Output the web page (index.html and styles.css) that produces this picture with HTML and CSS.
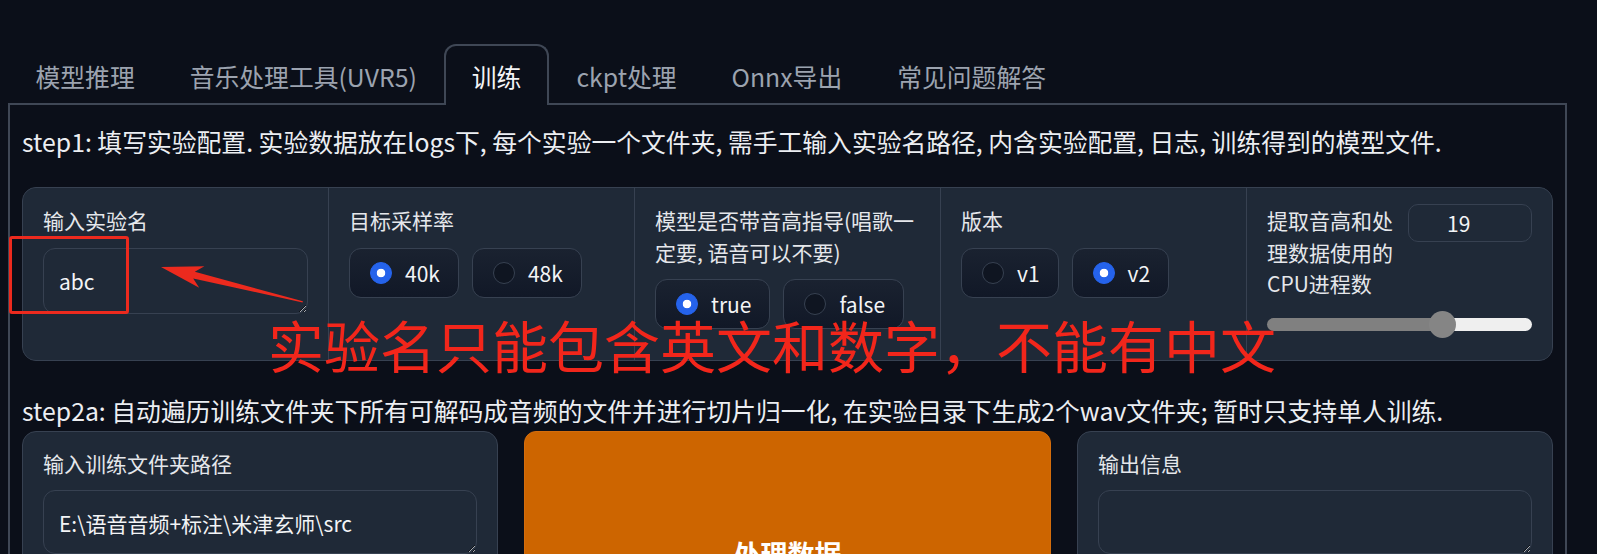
FILE: index.html
```html
<!DOCTYPE html>
<html lang="zh-CN">
<head>
    <meta charset="UTF-8">
    <meta name="viewport" content="width=device-width, initial-scale=1.0">
    <title>RVC WebUI</title>
    <link rel="stylesheet" href="styles.css">
</head>
<body>
<div class="app">
    <div class="tabs">
        <button class="tab">模型推理</button>
        <button class="tab">音乐处理工具(UVR5)</button>
        <button class="tab active">训练</button>
        <button class="tab">ckpt处理</button>
        <button class="tab">Onnx导出</button>
        <button class="tab">常见问题解答</button>
    </div>

    <div class="panel">
        <p class="step">step1: 填写实验配置. 实验数据放在logs下, 每个实验一个文件夹, 需手工输入实验名路径, 内含实验配置, 日志, 训练得到的模型文件.</p>

        <div class="form-row">
            <div class="field">
                <label class="label" for="expName">输入实验名</label>
                <textarea class="text-input" id="expName" rows="1">abc</textarea>
            </div>
            <div class="field">
                <span class="label">目标采样率</span>
                <div class="radios">
                    <label class="radio"><input type="radio" name="sr" checked><span>40k</span></label>
                    <label class="radio"><input type="radio" name="sr"><span>48k</span></label>
                </div>
            </div>
            <div class="field">
                <span class="label">模型是否带音高指导(唱歌一定要, 语音可以不要)</span>
                <div class="radios">
                    <label class="radio"><input type="radio" name="f0" checked><span>true</span></label>
                    <label class="radio"><input type="radio" name="f0"><span>false</span></label>
                </div>
            </div>
            <div class="field">
                <span class="label">版本</span>
                <div class="radios">
                    <label class="radio"><input type="radio" name="ver"><span>v1</span></label>
                    <label class="radio"><input type="radio" name="ver" checked><span>v2</span></label>
                </div>
            </div>
            <div class="field">
                <div class="slider-head">
                    <label class="label" for="cpuNum">提取音高和处理数据使用的CPU进程数</label>
                    <input class="number" type="number" id="cpuNum" value="19">
                </div>
                <input class="range" type="range" min="0" max="28" value="19" style="--fill: 66%">
            </div>
        </div>

        <p class="step step2">step2a: 自动遍历训练文件夹下所有可解码成音频的文件并进行切片归一化, 在实验目录下生成2个wav文件夹; 暂时只支持单人训练.</p>

        <div class="row">
            <div class="block">
                <label class="label" for="trainDir">输入训练文件夹路径</label>
                <textarea class="text-input short" id="trainDir" rows="1">E:\语音音频+标注\米津玄师\src</textarea>
            </div>
            <button class="primary">处理数据</button>
            <div class="block">
                <label class="label" for="info1">输出信息</label>
                <textarea class="text-input short" id="info1" rows="1"></textarea>
            </div>
        </div>
    </div>

    <!-- red markup drawn on top -->
    <div class="note-box"></div>
    <svg class="note-arrow" width="320" height="320" viewBox="0 0 320 320">
        <polygon fill="#ec2a1e" points="161,267 204.4,266.3 194.8,271.7 302.9,301.3 302.6,302.5 193.2,278.5 199.2,287.7"/>
    </svg>
    <div class="note-text">实验名只能包含英文和数字，不能有中文</div>
</div>
</body>
</html>
```

FILE: styles.css
```css
html, body {
    margin: 0;
    height: 100%;
    overflow: hidden;
}
body {
    background: #0b0f19;
    color: #e5e7eb;
    font-family: "Noto Sans CJK SC", "Noto Sans", sans-serif;
    font-size: 24.8px;
}
.app {
    position: relative;
    width: 1559px;
    padding: 44px 0 0 8px;
}

/* tab strip */
.tabs {
    display: flex;
    position: relative;
    z-index: 1;
}
.tab {
    height: 61px;
    margin-bottom: -2px;
    padding: 0 25.5px;
    border: 2px solid transparent;
    border-bottom: 0;
    border-radius: 12px 12px 0 0;
    background: none;
    color: #9ca3af;
    font: inherit;
    cursor: pointer;
}
.tab.active {
    border-color: #3f4755;
    background: #0b0f19;
    color: #f3f4f6;
}

.panel {
    height: 600px;
    padding: 18px 12px 0;
    border: 2px solid #3f4755;
}
.step {
    margin: 0;
    line-height: 37px;
    color: #eceef2;
}
.step2 {
    margin: 31px 0 2px;
}

/* first row: one box split in five */
.form-row {
    display: grid;
    grid-template-columns: repeat(5, 1fr);
    gap: 1px;
    margin-top: 27px;
    background: #374151;
    border: 1px solid #374151;
    border-radius: 14px;
    overflow: hidden;
}
.field {
    background: #1f2937;
    padding: 17px 20px;
    min-width: 0;
}
.label {
    display: block;
    margin-bottom: 11px;
    font-size: 21px;
    line-height: 31.5px;
    color: #e5e7eb;
}
.text-input {
    display: block;
    width: 100%;
    height: 66px;
    box-sizing: border-box;
    padding: 14px 15px;
    background: #1f2937;
    border: 1px solid #374151;
    border-radius: 12px;
    color: #f3f4f6;
    font: inherit;
    font-size: 21px;
    line-height: 36px;
    resize: vertical;
    outline: none;
    color-scheme: dark;
}
.text-input.short {
    height: 64px;
    padding-bottom: 12px;
}

.radios {
    display: flex;
    flex-wrap: wrap;
    gap: 13px;
}
.radio {
    display: flex;
    align-items: center;
    gap: 13px;
    height: 50px;
    box-sizing: border-box;
    padding: 0 18px 0 20px;
    border: 1px solid #374151;
    border-radius: 12px;
    background: linear-gradient(to top, #111827, #1a2230);
    color: #f3f4f6;
    font-size: 21px;
}
.radio input {
    appearance: none;
    -webkit-appearance: none;
    margin: 0;
    width: 22px;
    height: 22px;
    border-radius: 50%;
    border: 1px solid #374151;
    background: #0f1521;
}
.radio input:checked {
    border-color: #2563eb;
    background: #2563eb radial-gradient(circle, #fff 0 4px, transparent 4.6px);
}

/* cpu slider */
.slider-head {
    display: flex;
    align-items: flex-start;
    gap: 12px;
}
.slider-head .label {
    flex: 1;
    margin: 0;
}
.number {
    width: 124px;
    height: 38px;
    box-sizing: border-box;
    margin-top: -1px;
    padding: 0 0 0 38px;
    background: #1f2937;
    border: 1px solid #374151;
    border-radius: 10px;
    color: #f3f4f6;
    font: inherit;
    font-size: 21px;
    outline: none;
}
.number::-webkit-inner-spin-button,
.number::-webkit-outer-spin-button {
    -webkit-appearance: none;
    margin: 0;
}
.range {
    -webkit-appearance: none;
    appearance: none;
    display: block;
    width: 100%;
    height: 27px;
    margin: 11px 0 5px;
    background: transparent;
}
.range::-webkit-slider-runnable-track {
    height: 13px;
    border-radius: 7px;
    background: linear-gradient(to right, #808080 var(--fill), #efefef var(--fill));
}
.range::-webkit-slider-thumb {
    -webkit-appearance: none;
    width: 27px;
    height: 27px;
    margin-top: -7px;
    border: none;
    border-radius: 50%;
    background: #858585;
}

/* second row */
.row {
    display: grid;
    grid-template-columns: 476px 527px 1fr;
    gap: 26px;
}
.block {
    background: #1f2937;
    border: 1px solid #374151;
    border-radius: 14px;
    padding: 16px 20px;
}
.primary {
    height: 246px;
    border: 1px solid #d46d0c;
    border-radius: 12px;
    background: #cd6500;
    color: #fff;
    font: inherit;
    font-size: 27px;
    font-weight: 700;
    cursor: pointer;
}

/* annotation layer */
.note-box {
    position: absolute;
    left: 9px;
    top: 236px;
    width: 120px;
    height: 78px;
    box-sizing: border-box;
    border: 3px solid #ec2a1e;
    border-radius: 3px;
}
.note-arrow {
    position: absolute;
    left: 0;
    top: 0;
}
.note-text {
    position: absolute;
    left: 268px;
    top: 316px;
    font-size: 56px;
    line-height: 1;
    color: #f2261b;
    white-space: nowrap;
}
```
